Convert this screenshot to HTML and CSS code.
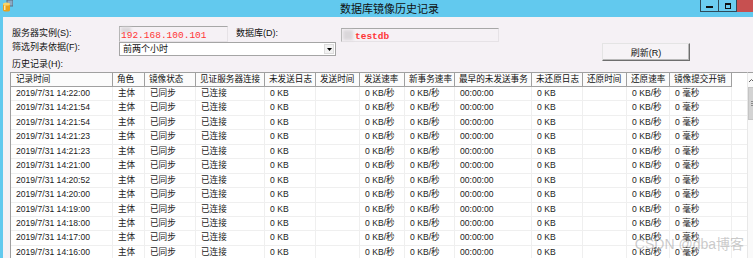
FILE: index.html
```html
<!DOCTYPE html>
<html>
<head lang="zh-CN">
    <meta charset="UTF-8">
    <title>数据库镜像历史记录</title>
    <link rel="stylesheet" href="styles.css">
</head>
<body>

<div id="window">
    <div class="titlebar">
        <svg class="app-icon" width="11" height="12" viewBox="0 0 11 12">
            <rect x="5" y="0" width="6" height="6" fill="#8aa9c4" stroke="#5b6f82" stroke-width="1"/>
            <path d="M1 4 v6 a3.5 1.6 0 0 0 7 0 v-6 z" fill="#e9a21c"/>
            <ellipse cx="4.5" cy="4" rx="3.5" ry="1.6" fill="#f8d36a"/>
            <rect x="2" y="5.5" width="1.5" height="4.5" fill="#fbe7a4"/>
        </svg>
        <span class="title">数据库镜像历史记录</span>
        <div class="controls">
            <span class="ctl ctl-min"><i></i></span>
            <span class="ctl ctl-max"><i></i></span>
            <span class="ctl ctl-close"></span>
        </div>
    </div>

    <div class="content">
        <div class="form">
            <label class="lbl lbl-server">服务器实例(S):</label>
            <div class="field field-server"><span class="smudge"></span><span class="val">192.168.100.101</span></div>
            <label class="lbl lbl-db">数据库(D):</label>
            <div class="field field-db"><span class="smudge"></span><span class="val">testdb</span></div>

            <label class="lbl lbl-filter">筛选列表依据(F):</label>
            <div class="combo">
                <span>前两个小时</span>
                <span class="combo-btn"><svg width="5" height="3" viewBox="0 0 5 3"><path d="M0 0h5L2.5 3z" fill="#000"/></svg></span>
            </div>
            <button class="btn-refresh">刷新(R)</button>

            <label class="lbl lbl-history">历史记录(H):</label>
        </div>

        <div class="list">
            <div class="grid" id="grid">
                <div class="row head">
                    <div>记录时间</div>
                    <div>角色</div>
                    <div>镜像状态</div>
                    <div>见证服务器连接</div>
                    <div>未发送日志</div>
                    <div>发送时间</div>
                    <div>发送速率</div>
                    <div>新事务速率</div>
                    <div>最早的未发送事务</div>
                    <div>未还原日志</div>
                    <div>还原时间</div>
                    <div>还原速率</div>
                    <div>镜像提交开销</div>
                    <div class="filler"></div>
                </div>
            </div>
            <div class="vscroll">
                <div class="arrow"><svg width="5" height="3" viewBox="0 0 5 3"><path d="M0 3L2.5 0.5L5 3" fill="none" stroke="#606060" stroke-width="1"/></svg></div>
                <div class="thumb"><i></i><i></i><i></i></div>
            </div>
        </div>
    </div>

    <div class="watermark">CSDN @dba博客</div>
</div>

<script>
    (function(){
        var times = ['14:22:00','14:21:54','14:21:54','14:21:23','14:21:23','14:21:00',
                     '14:20:52','14:20:00','14:19:00','14:18:00','14:17:00','14:16:00'];
        var grid = document.getElementById('grid');
        for(var i = 0; i < times.length; i++){
            var cells = ['2019/7/31 ' + times[i], '主体', '已同步', '已连接', '0 KB', '',
                         '0 KB/秒', '0 KB/秒', '00:00:00', '0 KB', '', '0 KB/秒', '0 毫秒'];
            var row = document.createElement('div');
            row.className = 'row';
            var html = '';
            for(var j = 0; j < cells.length; j++){
                html += '<div>' + cells[j] + '</div>';
            }
            html += '<div class="filler"></div>';
            row.innerHTML = html;
            grid.appendChild(row);
        }
    })();
</script>
</body>
</html>
```

FILE: styles.css
```css
html,body{
    margin: 0;
    padding: 0;
    width: 753px;
    height: 258px;
    overflow: hidden;
    background: #f5f1f5;
}
body{
    font-family: "Liberation Sans", "Noto Sans CJK SC", sans-serif;
    font-size: 9px;
    color: #111;
}
#window{
    position: relative;
    width: 753px;
    height: 258px;
    display: flex;
    flex-direction: column;
    border-left: 3px solid #62c9ee;
    box-sizing: border-box;
    background: #f5f1f5;
}

/* title bar */
.titlebar{
    display: flex;
    align-items: flex-start;
    height: 17px;
    margin-left: -3px;
    background: #62c9ee;
    flex-shrink: 0;
}
.app-icon{
    margin: 0 0 0 2px;
}
.title{
    margin-left: 327px;
    font-size: 11px;
    line-height: 17px;
    color: #111;
    font-family: "Noto Sans CJK SC", sans-serif;
}
.controls{
    display: flex;
    margin-left: auto;
}
.ctl{
    display: flex;
    align-items: center;
    justify-content: center;
    height: 12px;
    box-sizing: border-box;
    border: 1px solid #2f4b5a;
    border-top: none;
    background: #6ccdf0;
}
.ctl-min{
    width: 19px;
}
.ctl-min i{
    display: block;
    width: 7px;
    height: 2px;
    margin-top: 3px;
    background: #111;
}
.ctl-max{
    width: 18px;
    border-left: none;
}
.ctl-max i{
    display: block;
    width: 4px;
    height: 3px;
    border: 1px solid #111;
    border-top-width: 2px;
}
.ctl-close{
    width: 16px;
    border: none;
    background: #c75050;
}

/* form */
.content{
    display: flex;
    flex-direction: column;
    flex: 1;
    padding: 9px 0 0 7px;
    min-height: 0;
}
.form{
    display: grid;
    grid-template-columns: 107px 109px 8px 105px 158px 103px 88px;
    grid-template-rows: 16px 14px 16px;
    padding-left: 2px;
}
.lbl{
    align-self: center;
    white-space: nowrap;
    line-height: 12px;
}
.lbl-server{ grid-column: 1; grid-row: 1; margin-top: -2px; }
.lbl-db{ grid-column: 4; grid-row: 1; margin-top: -2px; }
.lbl-filter{ grid-column: 1; grid-row: 2; margin-top: -4px; }
.lbl-history{ grid-column: 1; grid-row: 3; margin-top: -1px; }

.field{
    position: relative;
    box-sizing: border-box;
    border-top: 1px solid #a7a7a7;
    border-left: 1px solid #b5b5b5;
    border-right: 1px solid #e6e2e6;
    border-bottom: 1px solid #e6e2e6;
    font-family: "Liberation Mono", monospace;
    color: #ff3535;
    white-space: nowrap;
}
.field .val{
    position: relative;
}
.field-server{
    grid-column: 2;
    grid-row: 1;
    height: 16px;
    padding: 3px 0 0 1px;
    font-size: 9.5px;
    line-height: 12px;
}
.field-db{
    grid-column: 5;
    grid-row: 1;
    height: 14px;
    align-self: end;
    padding: 2px 0 0 13px;
    font-size: 9.5px;
    font-weight: bold;
    line-height: 12px;
}
.smudge{
    position: absolute;
    left: 1px;
    top: 0;
    width: 10px;
    height: 6px;
    background: #dad7da;
    filter: blur(1.5px);
}
.field-db .smudge{
    top: 1px;
    height: 10px;
}

.combo{
    grid-column: 2 / 5;
    grid-row: 2;
    justify-self: start;
    width: 217px;
    height: 14px;
    box-sizing: border-box;
    display: flex;
    align-items: center;
    justify-content: space-between;
    padding-left: 3px;
    background: #fff;
    border: 1px solid #a5a5a5;
    line-height: 12px;
}
.combo-btn{
    display: flex;
    align-items: center;
    justify-content: center;
    width: 10px;
    height: 10px;
    margin-right: 1px;
    background: #f2f2f2;
    border: 1px solid #dcdcdc;
    box-sizing: border-box;
}
.btn-refresh{
    grid-column: 7;
    grid-row: 2 / 4;
    align-self: start;
    margin-top: 1px;
    height: 18px;
    padding: 0;
    font-family: inherit;
    font-size: 9px;
    color: #111;
    background: #f6f3f6;
    border: 1px solid;
    border-color: #e4e4e4 #6e6e6e #6e6e6e #e4e4e4;
    box-shadow: inset -1px -1px 0 #b9b9b9;
}

/* list view */
.list{
    display: flex;
    flex: 1;
    min-height: 0;
    border-left: 1px solid #9e9e9e;
    background: #fff;
    width: 760px;
}
.grid{
    width: 736px;
    flex-shrink: 0;
    overflow: hidden;
}
.row{
    display: grid;
    grid-template-columns: 102px 32px 51px 69px 51px 44px 45px 50px 77px 51px 44px 43px 62px 15px;
    height: 14.45px;
    line-height: 13px;
    font-size: 8.6px;
    color: #1c1c1c;
}
.row div{
    box-sizing: border-box;
    padding-left: 5px;
    white-space: nowrap;
    overflow: hidden;
    border-right: 1px solid #efefef;
    border-bottom: 1px solid #efefef;
}
.row .filler{
    border-right: none;
}
.row.head{
    height: 15px;
    background: #fbfbfb;
}
.row.head div{
    padding-left: 4px;
    border-top: 1px solid #a0a0a0;
    border-right: 1px solid #a0a0a0;
    border-bottom: 1px solid #a0a0a0;
    color: #111;
}
.row.head div:first-child{
    padding-left: 5px;
}
.row.head .filler{
    border-right: none;
    border-bottom: none;
    background: #fff;
}
.vscroll{
    width: 17px;
    flex-shrink: 0;
    background: #fafafa;
    border-top: 1px solid #a0a0a0;
    border-left: 1px solid #e8e8e8;
}
.vscroll .arrow{
    height: 14px;
    display: flex;
    align-items: center;
    padding-left: 1px;
}
.vscroll .thumb{
    height: 33px;
    background: #d3d3d3;
    border: 1px solid #c4c4c4;
    box-sizing: border-box;
    display: flex;
    flex-direction: column;
    justify-content: center;
    gap: 1px;
    padding-left: 2px;
}
.vscroll .thumb i{
    display: block;
    width: 3px;
    height: 1px;
    background: #8a8a8a;
}

.watermark{
    position: absolute;
    right: 9px;
    bottom: 6px;
    font-family: "Liberation Sans", "Noto Sans CJK SC", sans-serif;
    font-size: 14px;
    line-height: 16px;
    color: rgba(150, 150, 150, 0.5);
    pointer-events: none;
}
```
